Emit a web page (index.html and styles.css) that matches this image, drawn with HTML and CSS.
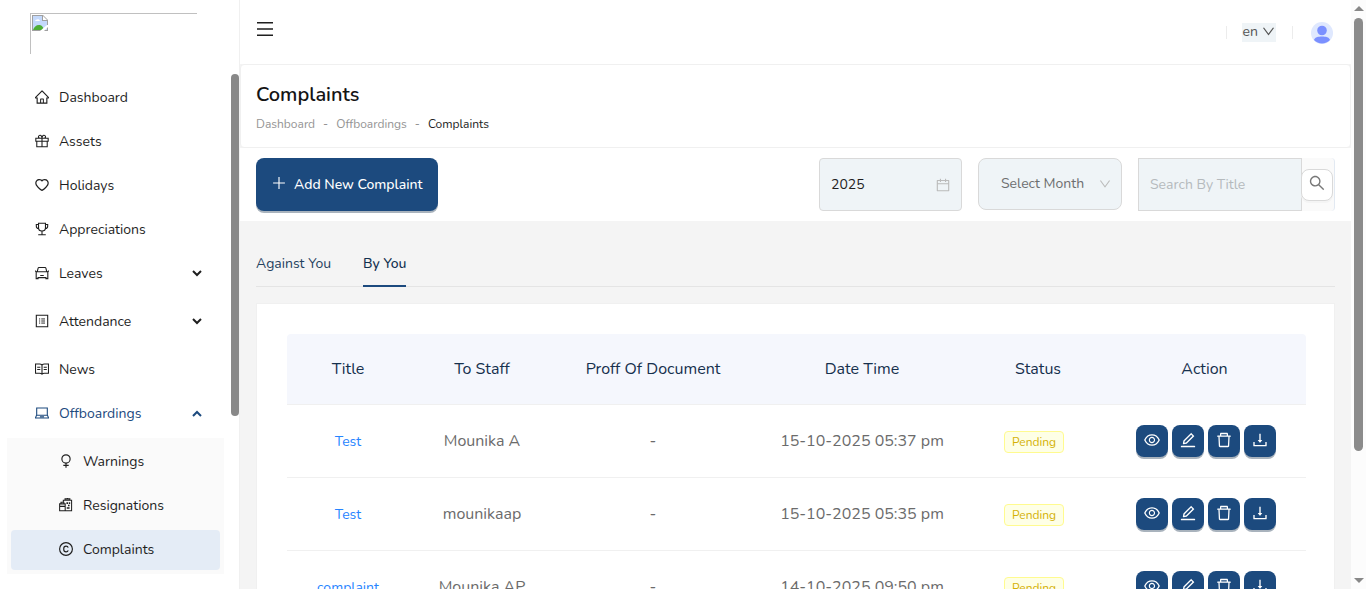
FILE: index.html
```html
<!DOCTYPE html>
<html lang="en">
<head>
<meta charset="utf-8">
<title>Complaints</title>
<link rel="stylesheet" href="styles.css">
</head>
<body>
<svg class="sprite" aria-hidden="true">
  <symbol id="home" viewBox="64 64 896 896"><path d="M946.5 505L560.1 118.8l-25.9-25.9a31.5 31.5 0 00-44.4 0L77.5 505a63.9 63.9 0 00-18.8 46c.4 35.2 29.7 63.3 64.9 63.3h42.5V940h691.8V614.3h43.4c17.1 0 33.2-6.7 45.3-18.8a63.6 63.6 0 0018.7-45.3c0-17-6.7-33.1-18.8-45.2zM568 868H456V664h112v204zm217.9-325.7V868H632V640c0-22.1-17.9-40-40-40H432c-22.1 0-40 17.9-40 40v228H238.1V542.3h-96l370-369.7 23.1 23.1L882 542.3h-96.1z"/></symbol>
  <symbol id="gift" viewBox="64 64 896 896"><g fill="none" stroke="currentColor" stroke-width="68"><path d="M116 334h792v190H116zM178 524v350h668V524M512 334v540M512 334H390c-90 0-120-60-100-120 30-80 150-90 190-10 20 40 32 80 32 130zm0 0h122c90 0 120-60 100-120-30-80-150-90-190-10-20 40-32 80-32 130z"/></g></symbol>
  <symbol id="heart" viewBox="64 64 896 896"><path d="M923 283.6a260.04 260.04 0 00-56.9-82.8 264.4 264.4 0 00-84-55.5A265.34 265.34 0 00679.7 125c-49.3 0-97.4 13.5-139.2 39-10 6.1-19.5 12.8-28.5 20.1-9-7.3-18.5-14-28.5-20.1-41.8-25.5-89.9-39-139.2-39-35.5 0-69.9 6.8-102.4 20.3-31.4 13-59.7 31.7-84 55.5a258.44 258.44 0 00-56.9 82.8c-13.9 32.3-21 66.6-21 101.9 0 33.3 6.8 68 20.3 103.3 11.3 29.5 27.5 60.1 48.2 91 32.8 48.9 77.9 99.9 133.9 151.6 92.8 85.7 184.7 144.9 188.6 147.3l23.7 15.2c10.5 6.7 24 6.7 34.5 0l23.7-15.2c3.9-2.5 95.7-61.6 188.6-147.3 56-51.7 101.1-102.7 133.9-151.6 20.7-30.9 37-61.5 48.2-91 13.5-35.3 20.3-70 20.3-103.3.1-35.3-7-69.6-20.9-101.9zM512 814.8S156 586.7 156 385.5C156 283.6 240.3 201 344.3 201c73.1 0 136.5 40.8 167.7 100.4C543.2 241.8 606.6 201 679.7 201c104 0 188.3 82.6 188.3 184.5 0 201.2-356 429.3-356 429.3z"/></symbol>
  <symbol id="trophy" viewBox="64 64 896 896"><g fill="none" stroke="currentColor" stroke-width="70"><path d="M290 148h444v290c0 122-90 212-222 212s-222-90-222-212zM290 224H148v110c0 90 60 144 150 150M734 224h142v110c0 90-60 144-150 150M512 650v220M270 878h484"/></g></symbol>
  <symbol id="car" viewBox="64 64 896 896"><g fill="none" stroke="currentColor" stroke-width="70"><path d="M208 420l56-224c8-24 24-36 48-36h400c24 0 40 12 48 36l56 224M70 370l70 60h744l70-60M140 430v440h120v-60h504v60h120V430zM400 670h224"/></g></symbol>
  <symbol id="profile" viewBox="64 64 896 896"><g fill="none" stroke="currentColor" stroke-width="70"><path d="M148 148h728v728H148z"/><path d="M464 380h240M464 512h240M464 644h240M320 380h76M320 512h76M320 644h76" stroke-width="60"/></g></symbol>
  <symbol id="read" viewBox="64 64 896 896"><g fill="none" stroke="currentColor" stroke-width="70"><path d="M96 196h264c60 0 112 24 152 60 40-36 92-60 152-60h264v592H664c-60 0-112 20-152 56-40-36-92-56-152-56H96zM512 256v588M204 400h200M204 544h200M620 400h200M620 544h200"/></g></symbol>
  <symbol id="laptop" viewBox="64 64 896 896"><g fill="none" stroke="currentColor" stroke-width="70"><path d="M172 672V196h680v476M172 660h680M158 672l-64 140v24h836v-24l-64-140M380 750h264"/></g></symbol>
  <symbol id="woman" viewBox="64 64 896 896"><g fill="none" stroke="currentColor" stroke-width="74"><circle cx="512" cy="380" r="264"/><path d="M512 644v300M340 790h344"/></g></symbol>
  <symbol id="badge" viewBox="64 64 896 896"><g fill="none" stroke="currentColor" stroke-width="66"><path d="M104 440h356v440H104zM104 600h356M190 430V330h184v100M340 300V210h530v670H460M450 210v-90h310v90M605 120V70"/></g><path d="M540 330h110v110H540zM700 330h80v110h-80zM560 650h180v100H560zM640 500h100v90H640z"/></symbol>
  <symbol id="copyright" viewBox="64 64 896 896"><g fill="none" stroke="currentColor" stroke-width="74"><circle cx="512" cy="512" r="410"/><path d="M650 430c-12-64-62-104-134-104-94 0-150 70-150 172v30c0 102 56 170 150 170 72 0 122-38 134-98"/></g></symbol>
  <symbol id="eye" viewBox="64 64 896 896"><path d="M942.2 486.2C847.4 286.5 704.1 186 512 186c-192.2 0-335.4 100.5-430.2 300.3a60.3 60.3 0 000 51.5C176.6 737.5 319.9 838 512 838c192.2 0 335.4-100.5 430.2-300.3 7.7-16.2 7.7-35 0-51.5zM512 766c-161.3 0-279.4-81.8-362.7-254C232.6 339.8 350.7 258 512 258c161.3 0 279.4 81.8 362.7 254C791.5 684.2 673.4 766 512 766zm-4-430c-97.2 0-176 78.8-176 176s78.8 176 176 176 176-78.8 176-176-78.8-176-176-176zm0 288c-61.9 0-112-50.1-112-112s50.1-112 112-112 112 50.1 112 112-50.1 112-112 112z"/></symbol>
  <symbol id="edit" viewBox="64 64 896 896"><path d="M257.7 752c2 0 4-.2 6-.5L431.9 722c2-.4 3.9-1.3 5.3-2.8l423.9-423.9a9.96 9.96 0 000-14.1L694.9 114.9c-1.9-1.9-4.4-2.9-7.1-2.9s-5.2 1-7.1 2.9L256.8 538.8c-1.5 1.5-2.4 3.3-2.8 5.3l-29.5 168.2a33.5 33.5 0 009.4 29.8c6.6 6.4 14.9 9.9 23.8 9.900zm67.4-174.4L687.8 215l73.3 73.3-362.7 362.6-88.9 15.7 15.6-89zM880 836H144c-17.7 0-32 14.3-32 32v36c0 4.4 3.6 8 8 8h784c4.4 0 8-3.6 8-8v-36c0-17.7-14.3-32-32-32z"/></symbol>
  <symbol id="delete" viewBox="64 64 896 896"><path d="M360 184h-8c4.4 0 8-3.6 8-8v8h304v-8c0 4.4 3.6 8 8 8h-8v72h72v-80c0-35.3-28.7-64-64-64H352c-35.3 0-64 28.7-64 64v80h72v-72zm504 72H160c-17.7 0-32 14.3-32 32v32c0 4.4 3.6 8 8 8h60.4l24.7 523c1.6 34.1 29.8 61 63.9 61h454c34.2 0 62.3-26.8 63.9-61l24.7-523H888c4.4 0 8-3.6 8-8v-32c0-17.7-14.3-32-32-32zM731.3 840H292.7l-24.2-512h487l-24.2 512z"/></symbol>
  <symbol id="download" viewBox="64 64 896 896"><path d="M505.7 661a8 8 0 0012.6 0l112-141.7c4.1-5.2.4-12.9-6.3-12.9h-74.1V168c0-4.4-3.6-8-8-8h-60c-4.4 0-8 3.6-8 8v338.3H400c-6.7 0-10.4 7.7-6.3 12.9l112 141.8zM878 626h-60c-4.4 0-8 3.6-8 8v154H214V634c0-4.4-3.6-8-8-8h-60c-4.4 0-8 3.6-8 8v198c0 17.7 14.3 32 32 32h684c17.7 0 32-14.3 32-32V634c0-4.4-3.6-8-8-8z"/></symbol>
  <symbol id="search" viewBox="64 64 896 896"><path d="M909.6 854.5L649.9 594.8C690.2 542.7 712 479 712 412c0-80.2-31.3-155.4-87.9-212.1-56.6-56.7-132-87.9-212.1-87.9s-155.5 31.3-212.1 87.9C143.2 256.5 112 331.8 112 412c0 80.1 31.3 155.5 87.9 212.1C256.5 680.8 331.8 712 412 712c67 0 130.6-21.8 182.7-62l259.7 259.6a8.2 8.2 0 0011.6 0l43.6-43.5a8.2 8.2 0 000-11.6zM570.4 570.4C528 612.7 471.8 636 412 636s-116-23.3-158.4-65.6C211.3 528 188 471.8 188 412s23.3-116.1 65.6-158.4C296 211.3 352.2 188 412 188s116.1 23.2 158.4 65.6S636 352.2 636 412s-23.3 116.1-65.6 158.4z"/></symbol>
  <symbol id="down" viewBox="64 64 896 896"><path d="M884 256h-75c-5.1 0-9.9 2.5-12.9 6.6L512 654.2 227.9 262.6c-3-4.1-7.8-6.6-12.9-6.6h-75c-6.5 0-10.3 7.4-6.5 12.7l352.6 486.1c12.8 17.6 39 17.6 51.7 0l352.6-486.1c3.9-5.3.1-12.7-6.4-12.7z"/></symbol>
  <symbol id="calendar" viewBox="64 64 896 896"><path d="M880 184H712v-64c0-4.4-3.6-8-8-8h-56c-4.4 0-8 3.6-8 8v64H384v-64c0-4.4-3.6-8-8-8h-56c-4.4 0-8 3.6-8 8v64H144c-17.7 0-32 14.3-32 32v664c0 17.7 14.3 32 32 32h736c17.7 0 32-14.3 32-32V216c0-17.7-14.3-32-32-32zm-40 656H184V460h656v380zM184 392V256h128v48c0 4.4 3.6 8 8 8h56c4.4 0 8-3.6 8-8v-48h256v48c0 4.4 3.6 8 8 8h56c4.4 0 8-3.6 8-8v-48h128v136H184z"/></symbol>
  <symbol id="menu" viewBox="0 0 18 18"><path d="M1 2h16v1.500H1zM1 8.200h16v1.500H1zM1 14.500h16V16H1z"/></symbol>
  <symbol id="plus" viewBox="64 64 896 896"><path d="M476 134h72v756h-72zM134 476h756v72H134z"/></symbol>
  <symbol id="chevron" viewBox="0 0 12 12"><path d="M2 4l4 4 4-4" fill="none" stroke="currentColor" stroke-width="2"/></symbol>
</svg>
<div class="app">
  <aside class="sidebar">
    <div class="logo" role="img" aria-label="Logo">
      <svg width="16" height="16" viewBox="0 0 16 16"><path d="M0 0h11l5 5v11H0z" fill="#a0a0a0"/><path d="M1 1h9v5h5v9H1z" fill="#c4d9fb"/><path d="M3 6.500a2 2 0 012-2 2 2 0 013 1.500H3z" fill="#fff"/><path d="M1 15c1-3 3-5 6-5 2 0 4 1 5 5z" fill="#4eae35"/><path d="M11 1v4h4z" fill="#fff"/><path d="M8 16l7-6h1v2l-4 4z" fill="#fff"/></svg>
    </div>
    <div class="side-body">
      <nav class="menu">
        <a class="item" href="#"><svg class="icon"><use href="#home"/></svg><span>Dashboard</span></a>
        <a class="item" href="#"><svg class="icon"><use href="#gift"/></svg><span>Assets</span></a>
        <a class="item" href="#"><svg class="icon"><use href="#heart"/></svg><span>Holidays</span></a>
        <a class="item" href="#"><svg class="icon"><use href="#trophy"/></svg><span>Appreciations</span></a>
        <button class="item group" type="button"><svg class="icon"><use href="#car"/></svg><span>Leaves</span><svg class="arrow"><use href="#chevron"/></svg></button>
        <button class="item group" type="button"><svg class="icon"><use href="#profile"/></svg><span>Attendance</span><svg class="arrow"><use href="#chevron"/></svg></button>
        <a class="item" href="#"><svg class="icon"><use href="#read"/></svg><span>News</span></a>
        <button class="item group open" type="button"><svg class="icon"><use href="#laptop"/></svg><span>Offboardings</span><svg class="arrow"><use href="#chevron"/></svg></button>
        <div class="submenu">
          <a class="item" href="#"><svg class="icon"><use href="#woman"/></svg><span>Warnings</span></a>
          <a class="item" href="#"><svg class="icon"><use href="#badge"/></svg><span>Resignations</span></a>
          <a class="item selected" href="#"><svg class="icon"><use href="#copyright"/></svg><span>Complaints</span></a>
        </div>
      </nav>
      <div class="side-thumb"></div>
    </div>
  </aside>
  <main class="main">
    <header class="topbar">
      <button class="toggle" type="button" aria-label="Toggle menu"><svg><use href="#menu"/></svg></button>
      <div class="tools">
        <i class="divider"></i>
        <button class="lang" type="button">en <svg><use href="#down"/></svg></button>
        <i class="divider"></i>
        <button class="avatar" type="button" aria-label="Account"><svg viewBox="0 0 22 22"><circle cx="11" cy="11" r="11" fill="#dfe8fe"/><circle cx="11" cy="8.500" r="4.800" fill="#7b90ff"/><path d="M3 18c1-3 4-3.500 8-3.500s7 .5 8 3.500a11 11 0 01-16 0z" fill="#7b90ff"/></svg></button>
      </div>
    </header>
    <section class="heading">
      <h1>Complaints</h1>
      <nav class="crumbs"><a href="#">Dashboard</a><span>-</span><a href="#">Offboardings</a><span>-</span><b>Complaints</b></nav>
    </section>
    <section class="filters">
      <button class="add" type="button"><svg><use href="#plus"/></svg>Add New Complaint</button>
      <div class="fields">
        <label class="year"><input type="text" value="2025" aria-label="Year"><svg><use href="#calendar"/></svg></label>
        <label class="month"><select aria-label="Month"><option>Select Month</option></select><svg><use href="#down"/></svg></label>
        <form class="search"><input type="text" placeholder="Search By Title" aria-label="Search by title"><div class="search-side"><button type="button" aria-label="Search"><svg><use href="#search"/></svg></button></div></form>
      </div>
    </section>
    <section class="content">
      <div class="tabs"><button class="tab" type="button">Against You</button><button class="tab active" type="button">By You</button></div>
      <div class="card">
        <table>
          <colgroup><col class="c-title"><col class="c-staff"><col class="c-doc"><col class="c-date"><col class="c-status"><col class="c-action"></colgroup>
          <thead><tr><th>Title</th><th>To Staff</th><th>Proff Of Document</th><th>Date Time</th><th>Status</th><th>Action</th></tr></thead>
          <tbody>
            <tr><td><a href="#">Test</a></td><td>Mounika A</td><td>-</td><td>15-10-2025 05:37 pm</td><td><span class="tag">Pending</span></td>
              <td><div class="actions"><button type="button" aria-label="View"><svg><use href="#eye"/></svg></button><button type="button" aria-label="Edit"><svg><use href="#edit"/></svg></button><button type="button" aria-label="Delete"><svg><use href="#delete"/></svg></button><button type="button" aria-label="Download"><svg><use href="#download"/></svg></button></div></td></tr>
            <tr><td><a href="#">Test</a></td><td>mounikaap</td><td>-</td><td>15-10-2025 05:35 pm</td><td><span class="tag">Pending</span></td>
              <td><div class="actions"><button type="button" aria-label="View"><svg><use href="#eye"/></svg></button><button type="button" aria-label="Edit"><svg><use href="#edit"/></svg></button><button type="button" aria-label="Delete"><svg><use href="#delete"/></svg></button><button type="button" aria-label="Download"><svg><use href="#download"/></svg></button></div></td></tr>
            <tr><td><a href="#">complaint</a></td><td>Mounika AP</td><td>-</td><td>14-10-2025 09:50 pm</td><td><span class="tag">Pending</span></td>
              <td><div class="actions"><button type="button" aria-label="View"><svg><use href="#eye"/></svg></button><button type="button" aria-label="Edit"><svg><use href="#edit"/></svg></button><button type="button" aria-label="Delete"><svg><use href="#delete"/></svg></button><button type="button" aria-label="Download"><svg><use href="#download"/></svg></button></div></td></tr>
          </tbody>
        </table>
      </div>
    </section>
  </main>
  <div class="scrollbar" aria-hidden="true"><i class="up"></i><i class="thumb"></i><i class="dn"></i></div>
</div>
</body>
</html>
```

FILE: styles.css
```css
* { box-sizing: border-box; }
body {
  margin: 0;
  font: 14px/22px Nunito, Lato, sans-serif;
  color: #1f1f1f;
  background: #fff;
}
button, input, select { font: inherit; color: inherit; margin: 0; }
button { border: 0; background: none; padding: 0; cursor: pointer; }
a { color: inherit; text-decoration: none; }
svg { display: block; fill: currentColor; flex: none; }
.sprite { position: absolute; width: 0; height: 0; }

.app { display: flex; height: 100vh; overflow: hidden; }

/* Sidebar */
.sidebar { width: 240px; flex: none; display: flex; flex-direction: column; border-right: 1px solid #f0f0f0; }
.logo { margin: 13px 42px 20px 30px; height: 41px; padding: 1px; border: solid #c0c0c0; border-width: 1px 0 0 1px; flex: none; }
.side-body { display: flex; flex: 1; min-height: 0; }
.menu { flex: 1; min-width: 0; padding: 4px 7px 0; display: flex; flex-direction: column; gap: 4px; }
.item { display: flex; align-items: center; gap: 10px; height: 40px; padding: 0 17px 0 24px; margin: 0 4px; border-radius: 4px; flex: none; text-align: left; }
.group { margin-bottom: 4px; }
.icon { width: 14px; height: 14px; margin-bottom: 2px; }
.arrow { width: 12px; height: 12px; margin: 0 0 2px auto; }
.open { color: #1c4a7e; }
.open .arrow { transform: rotate(180deg); margin-bottom: 0; }
.submenu { background: #fafafa; padding: 4px 0; display: flex; flex-direction: column; gap: 4px; margin-top: -4px; flex: none; }
.submenu .item { padding-left: 48px; }
.submenu .selected { background: #e4ecf6; }
.side-thumb { width: 8px; height: 342px; border-radius: 4px; background: #888; }

/* Main column */
.main { flex: 1; min-width: 0; background: #f4f4f4; }
.topbar { display: flex; justify-content: space-between; align-items: center; height: 64px; padding: 0 18px 0 16px; background: #fff; }
.toggle svg { width: 18px; height: 18px; }
.toggle { margin-bottom: 6px; }
.tools { display: flex; align-items: center; }
.divider { width: 1px; height: 13px; background: #ececec; }
.lang { display: flex; align-items: center; gap: 4px; height: 19px; margin: 0 16px 0 15px; padding: 0 1px; background: #eff4f7; color: #555; }
.lang svg { width: 13px; height: 13px; margin-bottom: 2px; }
.avatar { margin: 2px 0 0 18px; }
.avatar svg { width: 22px; height: 22px; }
.heading { height: 84px; padding: 16px 15px; border: 1px solid #f0f0f0; border-radius: 4px; background: #fff; }
h1 { margin: 0; font-size: 20px; line-height: 28px; font-weight: 600; color: #141414; }
.crumbs { display: flex; gap: 8px; margin-top: 5px; font-size: 12px; line-height: 20px; color: #949494; }
.crumbs b { font-weight: 400; color: #222; }

.filters { display: flex; justify-content: space-between; align-items: flex-start; padding: 10px 16px; background: #fff; }
.add { display: flex; align-items: center; gap: 8px; height: 53px; padding: 0 15px 0 16px; border-radius: 8px; background: #1c4a7e; color: #fff; font-weight: 500; box-shadow: 0 2px 0 #a9b3bd; }
.add svg { width: 14px; height: 14px; margin-bottom: 3px; }
.fields { display: flex; gap: 16px; }
.fields input, .fields select { min-width: 0; flex: 1; border: 0; padding: 0; outline: 0; background: none; appearance: none; }
.year, .month { display: flex; align-items: center; border: 1px solid #d9d9d9; background: #eff4f7; }
.year { width: 143px; height: 53px; padding: 0 11px; border-radius: 4px; }
.year svg { width: 14px; height: 14px; color: #bbb; }
.month { width: 144px; height: 52px; padding: 0 10px 0 22px; border-radius: 8px; color: #6d6f70; }
.month svg { width: 12px; height: 12px; color: #bbb; }
.search { display: flex; width: 197px; height: 53px; }
.fields .search input { border: 1px solid #d9d9d9; background: #eff4f7; padding: 0 11px; }
.search input::placeholder { color: #b5babd; opacity: 1; }
.search-side { width: 33px; padding-top: 11px; background: #fafafa; border-right: 1px solid #e2e9f2; border-radius: 0 4px 4px 0; }
.search-side button { display: grid; place-items: center; width: 32px; height: 32px; margin-left: -1px; padding-bottom: 4px; border: 1px solid #d9d9d9; border-radius: 8px; background: #fff; color: #777; box-shadow: 0 2px 0 #f4f4f4; }
.search-side svg { width: 16px; height: 16px; }

.content { padding: 16px 16px 0; }
.tabs { display: flex; gap: 32px; border-bottom: 1px solid #e4e4e4; margin-bottom: 16px; }
.tab { height: 50px; margin-bottom: -1px; padding-top: 6px; border-bottom: 2px solid transparent; color: #26425f; }
.tab.active { color: #12304f; border-color: #1c4a7e; font-weight: 500; }
.card { padding: 30px 28px 30px 30px; border: 1px solid #f0f0f0; background: #fff; }
table { width: 100%; table-layout: fixed; border-collapse: separate; border-spacing: 0; font-size: 16px; }
.c-title { width: 122px; }
.c-staff { width: 146px; }
.c-doc { width: 196px; }
.c-date { width: 222px; }
.c-status { width: 130px; }
.c-action { width: 203px; }
th { height: 71px; padding: 0; background: #f5f7fd; color: #16304d; font-weight: 400; border-bottom: 1px solid #f0f0f0; }
th:first-child { border-radius: 4px 0 0; }
th:last-child { border-radius: 0 4px 0 0; }
td { height: 73px; padding: 0; text-align: center; color: #6b6b6b; border-bottom: 1px solid #f0f0f0; }
td a { color: #2684ff; font-size: 14px; }
.tag { display: inline-block; margin: 2px 8px 0 0; padding: 0 7px; border: 1px solid #fffb8f; border-radius: 4px; background: #feffe6; color: #d4b106; font-size: 12px; line-height: 20px; vertical-align: middle; }
.actions { display: flex; justify-content: center; gap: 4px; padding-left: 2px; }
.actions button { display: grid; place-items: center; width: 32px; height: 32px; padding-bottom: 2px; border-radius: 8px; background: #1c4a7e; color: #fff; box-shadow: 0 2px 0 #a9b3bd; }
.actions svg { width: 16px; height: 16px; }

/* Page scrollbar */
.scrollbar { width: 15px; flex: none; display: flex; flex-direction: column; align-items: center; padding: 6px 0; background: #fcfcfc; }
.up, .dn { border: 5px solid transparent; }
.up { border-top: 0; border-bottom-color: #888; }
.dn { border-bottom: 0; border-top-color: #888; margin-top: auto; }
.thumb { width: 9px; height: 76%; max-height: 433px; margin-top: 7px; border-radius: 5px; background: #8b8b8b; }
```
